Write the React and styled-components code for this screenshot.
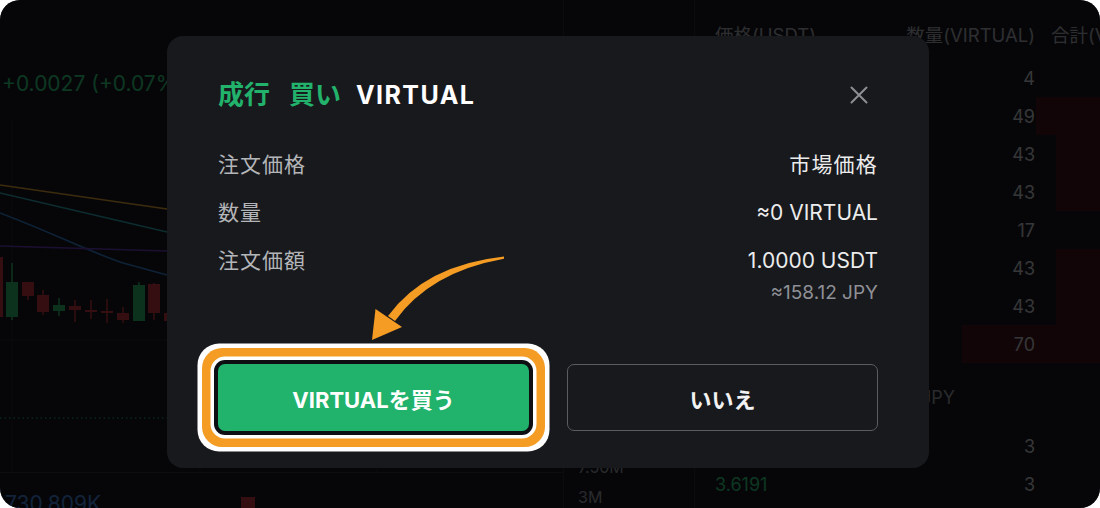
import React from "react";
import styled, { createGlobalStyle } from "styled-components";

const GlobalStyle = createGlobalStyle`
  html, body {
    margin: 0;
    padding: 0;
    background: #ffffff;
  }
  body {
    font-family: Inter, "Noto Sans CJK JP", sans-serif;
  }
`;

const asks = [
  { price: "3.6250", qty: "4", depth: 0 },
  { price: "3.6240", qty: "49", depth: 64 },
  { price: "3.6230", qty: "43", depth: 44 },
  { price: "3.6220", qty: "43", depth: 44 },
  { price: "3.6210", qty: "17", depth: 0 },
  { price: "3.6200", qty: "43", depth: 44 },
  { price: "3.6195", qty: "43", depth: 44 },
  { price: "3.6194", qty: "70", depth: 138 },
];

const trades = [
  { price: "3.6192", qty: "3" },
  { price: "3.6191", qty: "3" },
];

const candles = [
  { x: -9, body: [257, 317], wick: [250, 320], up: false },
  { x: 6, body: [282, 317], wick: [263, 320], up: true },
  { x: 22, body: [282, 296], wick: [282, 300], up: false },
  { x: 37, body: [295, 312], wick: [290, 315], up: false },
  { x: 53, body: [305, 311], wick: [298, 316], up: true },
  { x: 69, body: [306, 310], wick: [300, 322], up: false },
  { x: 85, body: [310, 312], wick: [300, 319], up: false },
  { x: 101, body: [311, 313], wick: [299, 323], up: false },
  { x: 117, body: [313, 320], wick: [307, 323], up: false },
  { x: 133, body: [285, 321], wick: [282, 321], up: true },
  { x: 148, body: [284, 313], wick: [283, 320], up: false },
  { x: 164, body: [313, 321], wick: [310, 323], up: false },
];

const App = () => {
  return (
    <>
      <GlobalStyle />
      <Frame>
        <ChartCol>
          <PriceChange>+0.0027 (+0.07%)</PriceChange>
          <ChartSvg viewBox="0 120 563 352">
            <g stroke="#22252d" strokeWidth="1">
              <line x1="12" y1="120" x2="12" y2="472" />
              <line x1="200" y1="120" x2="200" y2="472" />
              <line x1="377" y1="120" x2="377" y2="472" />
              <line x1="0" y1="340" x2="563" y2="340" />
            </g>
            <g fill="none" strokeWidth="1.6">
              <path d="M0 185 L167 209 L563 262" stroke="#c8912a" />
              <path d="M0 193 L167 232 L563 300" stroke="#2a95a0" />
              <path d="M0 213 C60 236 90 252 123 263 L167 275 L563 320" stroke="#2f72b8" />
              <path d="M0 246 L167 251 L563 258" stroke="#5e35a8" />
            </g>
            {candles.map((c, i) => (
              <g key={i} fill={c.up ? "#2aa862" : "#b02f38"} stroke={c.up ? "#2aa862" : "#b02f38"}>
                <line x1={c.x + 6} y1={c.wick[0]} x2={c.x + 6} y2={c.wick[1]} strokeWidth="1.5" />
                <rect x={c.x} y={c.body[0]} width="12" height={Math.max(c.body[1] - c.body[0], 2)} stroke="none" />
              </g>
            ))}
            <line x1="0" y1="418" x2="563" y2="418" stroke="#2fb86c" strokeWidth="1.2" strokeDasharray="1.5 3" />
          </ChartSvg>
          <VolumeRow>
            <VolumeText>730.809K</VolumeText>
            <VolumeBar />
          </VolumeRow>
        </ChartCol>

        <MidCol>
          <AxisLabel>7.50M</AxisLabel>
          <AxisLabel>3M</AxisLabel>
        </MidCol>

        <BookCol>
          <BookHeader>
            <span>価格(USDT)</span>
            <HeadRight>数量(VIRTUAL)</HeadRight>
            <HeadTotal>合計(VIRTUAL)</HeadTotal>
          </BookHeader>
          {asks.map((row) => (
            <BookRow key={row.price}>
              {row.depth > 0 && <DepthBar style={{ width: row.depth }} />}
              <Price $side="ask">{row.price}</Price>
              <Qty>{row.qty}</Qty>
            </BookRow>
          ))}
          <MidPrice>
            <MidValue>3.6193 ≈572.44 JPY</MidValue>
          </MidPrice>
          <Trades>
            {trades.map((t) => (
              <BookRow key={t.price}>
                <Price $side="bid">{t.price}</Price>
                <Qty>{t.qty}</Qty>
              </BookRow>
            ))}
          </Trades>
        </BookCol>

        <Backdrop />

        <Modal>
          <TitleRow>
            <Title>
              <Green $gap={19}>成行</Green>
              <Green $gap={15}>買い</Green>
              <Ticker>VIRTUAL</Ticker>
            </Title>
            <CloseButton aria-label="close">
              <svg width="18" height="18" viewBox="0 0 18 18">
                <path d="M1.5 1.5 L16.5 16.5 M16.5 1.5 L1.5 16.5" stroke="#8e8f94" strokeWidth="2" strokeLinecap="round" />
              </svg>
            </CloseButton>
          </TitleRow>

          <Details>
            <DetailRow>
              <Label>注文価格</Label>
              <Value $cjk>市場価格</Value>
            </DetailRow>
            <DetailRow>
              <Label>数量</Label>
              <Value>≈0 VIRTUAL</Value>
            </DetailRow>
            <DetailRow>
              <Label>注文価額</Label>
              <Value>1.0000 USDT</Value>
            </DetailRow>
          </Details>
          <SubValue>≈158.12 JPY</SubValue>

          <Actions>
            <ActionButton $variant="buy">VIRTUALを買う</ActionButton>
            <ActionButton $variant="cancel">いいえ</ActionButton>
          </Actions>

          <ArrowSvg viewBox="365 250 145 95">
            <path
              d="M504 256.4 Q425 265 388 316 L395 321 Q430 272 504 258.8 Z"
              fill="#f49c23"
            />
            <path d="M372 340 L375.5 309 L402 327 Z" fill="#f49c23" />
          </ArrowSvg>
        </Modal>
      </Frame>
    </>
  );
};

const Frame = styled.div`
  position: relative;
  display: flex;
  width: 1100px;
  height: 508px;
  border-radius: 20px;
  overflow: hidden;
  background: #15171e;
`;

const ChartCol = styled.div`
  display: flex;
  flex-direction: column;
  width: 563px;
  flex-shrink: 0;
`;

const PriceChange = styled.div`
  box-sizing: border-box;
  height: 120px;
  padding: 71px 0 0 2px;
  font-size: 21px;
  line-height: 26px;
  white-space: nowrap;
  color: #2cba72;
`;

const ChartSvg = styled.svg`
  display: block;
  width: 563px;
  height: 352px;
`;

const VolumeRow = styled.div`
  display: flex;
  align-items: flex-end;
  box-sizing: border-box;
  height: 36px;
  padding-left: 5px;
  border-top: 1px solid #2a2d35;
`;

const VolumeText = styled.div`
  font-size: 21px;
  line-height: 24px;
  margin-bottom: -8px;
  color: #3d76c2;
`;

const VolumeBar = styled.div`
  width: 14px;
  height: 11px;
  margin-left: 140px;
  background: #b02f38;
`;

const MidCol = styled.div`
  display: flex;
  flex-direction: column;
  justify-content: flex-end;
  gap: 8px;
  box-sizing: border-box;
  width: 132px;
  flex-shrink: 0;
  padding: 0 0 0 14px;
  border-left: 1px solid #22252d;
  border-right: 1px solid #22252d;
`;

const AxisLabel = styled.div`
  font-size: 16px;
  line-height: 22px;
  color: #8a8c93;
`;

const BookCol = styled.div`
  display: flex;
  flex-direction: column;
  flex: 1;
  padding: 23px 0 0 20px;
`;

const BookHeader = styled.div`
  display: grid;
  grid-template-columns: 180px 140px 1fr;
  font-size: 18.5px;
  line-height: 24px;
  color: #9a9ca3;
  white-space: nowrap;
  margin-bottom: 12px;
`;

const HeadRight = styled.span`
  text-align: right;
`;

const HeadTotal = styled.span`
  padding-left: 16px;
  overflow: hidden;
`;

const BookRow = styled.div`
  position: relative;
  display: grid;
  grid-template-columns: 180px 140px 1fr;
  align-items: center;
  height: 38px;
  font-size: 18px;
`;

const DepthBar = styled.div`
  position: absolute;
  top: 0;
  bottom: 0;
  right: 0;
  background: #3c1219;
`;

const Price = styled.span`
  position: relative;
  color: ${({ $side }) => ($side === "ask" ? "#e0454f" : "#2eb872")};
`;

const Qty = styled.span`
  position: relative;
  text-align: right;
  color: #b4b6bc;
`;

const MidPrice = styled.div`
  display: flex;
  align-items: center;
  height: 38px;
  margin-top: 15px;
`;

const MidValue = styled.span`
  width: 240px;
  text-align: right;
  font-size: 18px;
  color: #8a8c93;
`;

const Trades = styled.div`
  margin-top: 11px;
`;

const Backdrop = styled.div`
  position: absolute;
  inset: 0;
  background: rgba(0, 0, 0, 0.7);
`;

const Modal = styled.div`
  position: absolute;
  left: 167px;
  top: 36px;
  display: flex;
  flex-direction: column;
  box-sizing: border-box;
  width: 762px;
  height: 432px;
  padding: 40px 51px 37px;
  border-radius: 16px;
  background: #18191d;
`;

const TitleRow = styled.div`
  display: flex;
  align-items: center;
  justify-content: space-between;
  height: 38px;
`;

const Title = styled.div`
  font-size: 26px;
  font-weight: 700;
  line-height: 38px;
  color: #ffffff;
`;

const Green = styled.span`
  color: #22b26b;
  margin-right: ${({ $gap }) => $gap}px;
`;

const Ticker = styled.span`
  font-size: 25px;
  letter-spacing: 1.4px;
`;

const CloseButton = styled.button`
  display: flex;
  width: 18px;
  height: 18px;
  padding: 0;
  margin-right: 10px;
  border: none;
  background: none;
  cursor: pointer;
`;

const Details = styled.div`
  display: flex;
  flex-direction: column;
  gap: 20px;
  margin-top: 37px;
`;

const DetailRow = styled.div`
  display: flex;
  justify-content: space-between;
  font-size: 21px;
  line-height: 28px;
`;

const Label = styled.span`
  color: #b4b5b9;
  letter-spacing: 1px;
`;

const Value = styled.span`
  color: #ececec;
  text-align: right;
  letter-spacing: ${({ $cjk }) => ($cjk ? "1.2px" : "0")};
`;

const SubValue = styled.div`
  margin-top: 8px;
  font-size: 19px;
  line-height: 20px;
  text-align: right;
  color: #8f9095;
`;

const Actions = styled.div`
  display: grid;
  grid-template-columns: 1fr 1fr;
  gap: 38px;
  margin-top: auto;
`;

const ActionButton = styled.button`
  height: 67px;
  border-radius: 7px;
  font-family: inherit;
  font-size: 22px;
  font-weight: 700;
  cursor: pointer;
  ${({ $variant }) =>
    $variant === "buy"
      ? `
    border: none;
    background: #21b26c;
    color: #ffffff;
    box-shadow: 0 0 0 4px #0e0f13, 0 0 0 7.5px #ffffff, 0 0 0 16px #f49c23, 0 0 0 20.5px #ffffff;
  `
      : `
    border: 1.5px solid #5b5c60;
    background: transparent;
    color: #f2f2f2;
  `}
`;

const ArrowSvg = styled.svg`
  position: absolute;
  left: 198px;
  top: 214px;
  width: 145px;
  height: 95px;
`;

export default App;
